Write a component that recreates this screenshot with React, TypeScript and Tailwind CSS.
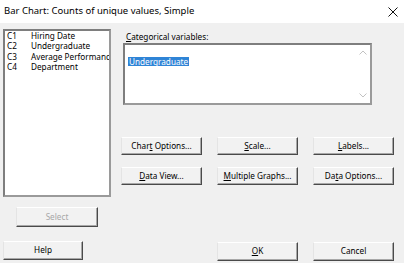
import React from 'react';

const font = { fontFamily: '"Segoe UI", "Noto Sans", sans-serif' };

const columns = [
  { id: 'C1', name: 'Hiring Date' },
  { id: 'C2', name: 'Undergraduate' },
  { id: 'C3', name: 'Average Performanc' },
  { id: 'C4', name: 'Department' },
];

interface BtnProps {
  children: React.ReactNode;
  className?: string;
  disabled?: boolean;
}

const Btn: React.FC<BtnProps> = ({ children, className = '', disabled }) => (
  <button
    className={`flex items-center justify-center bg-[#f2f2f2] border border-t-white border-l-[#e4e4e4] border-r-[#4a4a4a] border-b-[#4a4a4a] shadow-[inset_-1px_-1px_0_#a8a8a8] text-[8.2px] leading-none ${disabled ? 'text-[#a8a8a8]' : 'text-black'} ${className}`}
  >
    {children}
  </button>
);

const U: React.FC<{ children: React.ReactNode }> = ({ children }) => (
  <span className="underline underline-offset-[1px] decoration-[0.5px]">{children}</span>
);

const App: React.FC = () => {
  return (
    <div className="w-[404px] h-[263px] bg-[#f0f0f0] overflow-hidden select-none" style={font}>
      <div className="h-[23px] bg-white flex items-center justify-between pl-[4px] pr-[6px]">
        <span className="text-[9.5px] text-black">Bar Chart: Counts of unique values, Simple</span>
        <svg width="10" height="10" viewBox="0 0 10 10">
          <path d="M0.5 0.5 L9.5 9.5 M9.5 0.5 L0.5 9.5" stroke="#111" strokeWidth="1" />
        </svg>
      </div>

      <div className="flex">
        <div className="flex flex-col pl-[3px] pt-[6px]">
          <div className="w-[108px] h-[168px] overflow-hidden bg-white border-2 border-t-[#7e7e7e] border-l-[#7e7e7e] border-r-[#9a9a9a] border-b-[#9a9a9a] pl-[2px] text-[8.2px] leading-[10.4px] text-black">
            {columns.map(c => (
              <div key={c.id} className="flex whitespace-nowrap">
                <span className="w-[24px] shrink-0">{c.id}</span>
                <span>{c.name}</span>
              </div>
            ))}
          </div>
          <Btn disabled className="ml-[13px] mt-[10px] w-[82px] h-[20px]">Select</Btn>
          <Btn className="mt-[14px] w-[80px] h-[19px]">Help</Btn>
        </div>

        <div className="flex flex-col ml-[10px] pt-[7px]">
          <div className="ml-[5px] h-[13px] text-[8.2px] leading-[13px] text-black">
            <U>C</U>ategorical variables:
          </div>
          <div className="ml-[2px] w-[249px] h-[62px] bg-white border-2 border-t-[#7e7e7e] border-l-[#7e7e7e] border-r-[#9a9a9a] border-b-[#9a9a9a] flex">
            <div className="flex-1 pl-[3px] pt-[2px]">
              <span className="inline-block bg-[#2f84d6] text-white text-[8.2px] leading-[9px] h-[9px] px-[1px]">Undergraduate</span>
            </div>
            <div className="w-[14px] flex flex-col items-center justify-between py-[5px]">
              <svg width="8" height="5" viewBox="0 0 8 5">
                <path d="M0.5 4.5 L4 1 L7.5 4.5" fill="none" stroke="#c2c2c2" strokeWidth="1" />
              </svg>
              <svg width="8" height="5" viewBox="0 0 8 5">
                <path d="M0.5 0.5 L4 4 L7.5 0.5" fill="none" stroke="#c2c2c2" strokeWidth="1" />
              </svg>
            </div>
          </div>

          <div className="grid grid-cols-[81px_81px_81px] gap-x-[15px] gap-y-[12px] mt-[32px]">
            <Btn className="h-[18px]">Char<U>t</U>&nbsp;Options...</Btn>
            <Btn className="h-[18px]"><U>S</U>cale...</Btn>
            <Btn className="h-[18px]"><U>L</U>abels...</Btn>
            <Btn className="h-[18px]"><U>D</U>ata View...</Btn>
            <Btn className="h-[18px]"><U>M</U>ultiple Graphs...</Btn>
            <Btn className="h-[18px]">Da<U>t</U>a Options...</Btn>
          </div>

          <div className="grid grid-cols-[81px_81px_81px] gap-x-[15px] mt-[57px]">
            <div />
            <Btn className="h-[19px]"><U>O</U>K</Btn>
            <Btn className="h-[19px]">Cancel</Btn>
          </div>
        </div>
      </div>
    </div>
  );
};

export default App;
